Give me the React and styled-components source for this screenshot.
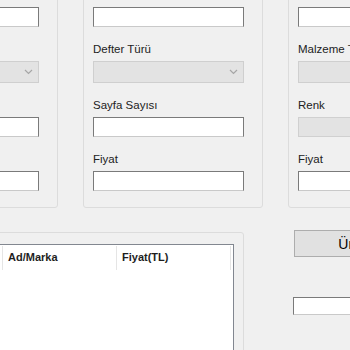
import React from 'react';
import styled, { createGlobalStyle } from 'styled-components';

const GlobalStyle = createGlobalStyle`
  html, body {
    margin: 0;
    padding: 0;
    background: #f0f0f0;
    overflow: hidden;
  }
  body {
    font-family: "Liberation Sans", Arial, sans-serif;
    font-size: 12px;
    color: #000;
  }
`;

const groups = [
  {
    id: 'kalem',
    fields: [
      { label: '', kind: 'text' },
      { label: '', kind: 'combo' },
      { label: '', kind: 'text' },
      { label: '', kind: 'text' },
    ],
  },
  {
    id: 'defter',
    fields: [
      { label: '', kind: 'text' },
      { label: 'Defter Türü', kind: 'combo' },
      { label: 'Sayfa Sayısı', kind: 'text' },
      { label: 'Fiyat', kind: 'text' },
    ],
  },
  {
    id: 'malzeme',
    fields: [
      { label: '', kind: 'text' },
      { label: 'Malzeme Türü', kind: 'combo' },
      { label: 'Renk', kind: 'disabled' },
      { label: 'Fiyat', kind: 'text' },
    ],
  },
];

const columns = ['', 'Ad/Marka', 'Fiyat(TL)'];

function Chevron() {
  return (
    <svg width="9" height="6" viewBox="0 0 9 6">
      <path d="M1 1 L4.5 4.5 L8 1" fill="none" stroke="#a6a6a6" strokeWidth="1.2" />
    </svg>
  );
}

function Field({ label, kind }) {
  return (
    <FieldWrap>
      <Label>{label}</Label>
      {kind === 'combo' ? (
        <Combo>
          <Chevron />
        </Combo>
      ) : (
        <TextBox $disabled={kind === 'disabled'} />
      )}
    </FieldWrap>
  );
}

export default function App() {
  return (
    <Form>
      <GlobalStyle />
      <TopRow>
        {groups.map((g) => (
          <GroupBox key={g.id}>
            {g.fields.map((f, i) => (
              <Field key={i} label={f.label} kind={f.kind} />
            ))}
          </GroupBox>
        ))}
      </TopRow>
      <BottomRow>
        <ListGroup>
          <ListView>
            <HeaderRow>
              {columns.map((c, i) => (
                <HeaderCell key={i}>{c}</HeaderCell>
              ))}
            </HeaderRow>
          </ListView>
        </ListGroup>
        <SideColumn>
          <Button>Ürün Ekle</Button>
          <TotalBox />
        </SideColumn>
      </BottomRow>
    </Form>
  );
}

const Form = styled.div`
  margin-left: -122px;
  margin-top: -20px;
  width: 700px;
`;

const TopRow = styled.div`
  display: flex;
  gap: 25px;
`;

const GroupBox = styled.div`
  width: 180px;
  box-sizing: border-box;
  border: 1px solid #dcdcdc;
  border-radius: 3px;
  padding: 8px 0 16px 9px;
  display: flex;
  flex-direction: column;
  gap: 16px;
`;

const FieldWrap = styled.div`
  display: flex;
  flex-direction: column;
  gap: 3px;
`;

const Label = styled.div`
  height: 15px;
  line-height: 13px;
  font-size: 11.5px;
  color: #222;
  white-space: nowrap;
`;

const TextBox = styled.div`
  width: 151px;
  height: 20px;
  box-sizing: border-box;
  background: ${(p) => (p.$disabled ? '#e3e3e3' : '#ffffff')};
  border: 1px solid ${(p) => (p.$disabled ? '#d0d0d0' : '#7a7a7a')};
  border-bottom-color: ${(p) => (p.$disabled ? '#d0d0d0' : '#c9c9c9')};
`;

const Combo = styled.div`
  width: 151px;
  height: 22px;
  box-sizing: border-box;
  background: #e3e3e3;
  border: 1px solid #cfcfcf;
  display: flex;
  align-items: center;
  justify-content: flex-end;
  padding-right: 5px;
`;

const BottomRow = styled.div`
  display: flex;
  align-items: flex-start;
  margin-top: 24px;
  gap: 50px;
`;

const ListGroup = styled.div`
  width: 366px;
  height: 200px;
  box-sizing: border-box;
  border: 1px solid #dcdcdc;
  border-radius: 3px;
  padding: 11px 9px 0 9px;
`;

const ListView = styled.div`
  height: 100%;
  box-sizing: border-box;
  background: #fff;
  border: 1px solid #828790;
  border-bottom: none;
`;

const HeaderRow = styled.div`
  display: flex;
  height: 24px;
  padding-top: 1px;
`;

const HeaderCell = styled.div`
  width: 114px;
  flex-shrink: 0;
  box-sizing: border-box;
  border-right: 1px solid #e5e5e5;
  padding-left: 5px;
  line-height: 23px;
  font-size: 11px;
  font-weight: bold;
  color: #1e1e1e;
  white-space: nowrap;
`;

const SideColumn = styled.div`
  display: flex;
  flex-direction: column;
  margin-top: -2px;
  gap: 40px;
`;

const Button = styled.div`
  width: 150px;
  height: 27px;
  box-sizing: border-box;
  background: #e1e1e1;
  border: 1px solid #adadad;
  display: flex;
  align-items: center;
  justify-content: center;
  font-size: 14px;
  color: #000;
`;

const TotalBox = styled.div`
  width: 151px;
  height: 18px;
  margin-left: -1px;
  box-sizing: border-box;
  background: #fff;
  border: 1px solid #7a7a7a;
  border-bottom-color: #c9c9c9;
`;
